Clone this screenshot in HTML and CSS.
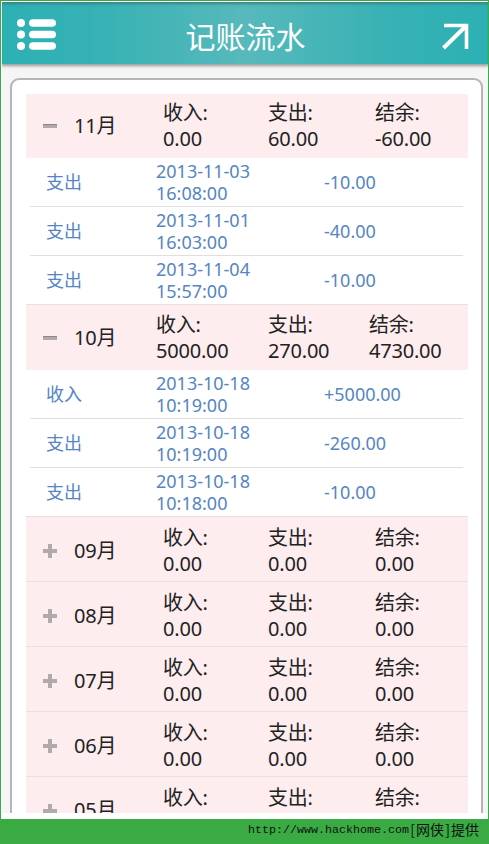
FILE: index.html
```html
<!DOCTYPE html>
<html lang="zh-CN">
<head>
    <meta charset="UTF-8">
    <meta name="viewport" content="width=device-width, initial-scale=1.0">
    <title>记账流水</title>
    <link rel="stylesheet" href="styles.css">
</head>
<body>
    <div class="frame">
        <div class="screen">
            <header class="topbar">
                <svg class="menu-icon" width="40" height="34" viewBox="0 0 40 34" fill="#fff">
                    <circle cx="5" cy="5" r="4"/>
                    <circle cx="5" cy="16.5" r="4"/>
                    <circle cx="5" cy="28" r="4"/>
                    <rect x="13" y="1.2" width="27" height="7.6" rx="3.8"/>
                    <rect x="13" y="12.7" width="27" height="7.6" rx="3.8"/>
                    <rect x="13" y="24.2" width="27" height="7.6" rx="3.8"/>
                </svg>
                <h1>记账流水</h1>
                <svg class="share-icon" width="28" height="28" viewBox="0 0 28 28" fill="none" stroke="#fff">
                    <path d="M2 2.5H24.5V26" stroke-width="3.6"/>
                    <path d="M1.5 25L24 3" stroke-width="4"/>
                </svg>
            </header>

            <main class="panel">
                <section>
                    <div class="month first">
                        <span class="toggle minus"></span>
                        <span class="name">11月</span>
                        <span>收入:<br>0.00</span>
                        <span>支出:<br>60.00</span>
                        <span>结余:<br>-60.00</span>
                    </div>
                    <ul>
                        <li><span>支出</span><span>2013-11-03<br>16:08:00</span><span>-10.00</span></li>
                        <li><span>支出</span><span>2013-11-01<br>16:03:00</span><span>-40.00</span></li>
                        <li><span>支出</span><span>2013-11-04<br>15:57:00</span><span>-10.00</span></li>
                    </ul>
                </section>

                <section>
                    <div class="month wide">
                        <span class="toggle minus"></span>
                        <span class="name">10月</span>
                        <span>收入:<br>5000.00</span>
                        <span>支出:<br>270.00</span>
                        <span>结余:<br>4730.00</span>
                    </div>
                    <ul>
                        <li><span>收入</span><span>2013-10-18<br>10:19:00</span><span>+5000.00</span></li>
                        <li><span>支出</span><span>2013-10-18<br>10:19:00</span><span>-260.00</span></li>
                        <li><span>支出</span><span>2013-10-18<br>10:18:00</span><span>-10.00</span></li>
                    </ul>
                </section>

                <section>
                    <div class="month">
                        <span class="toggle"></span>
                        <span class="name">09月</span>
                        <span>收入:<br>0.00</span>
                        <span>支出:<br>0.00</span>
                        <span>结余:<br>0.00</span>
                    </div>
                    <div class="month">
                        <span class="toggle"></span>
                        <span class="name">08月</span>
                        <span>收入:<br>0.00</span>
                        <span>支出:<br>0.00</span>
                        <span>结余:<br>0.00</span>
                    </div>
                    <div class="month">
                        <span class="toggle"></span>
                        <span class="name">07月</span>
                        <span>收入:<br>0.00</span>
                        <span>支出:<br>0.00</span>
                        <span>结余:<br>0.00</span>
                    </div>
                    <div class="month">
                        <span class="toggle"></span>
                        <span class="name">06月</span>
                        <span>收入:<br>0.00</span>
                        <span>支出:<br>0.00</span>
                        <span>结余:<br>0.00</span>
                    </div>
                    <div class="month">
                        <span class="toggle"></span>
                        <span class="name">05月</span>
                        <span>收入:</span>
                        <span>支出:</span>
                        <span>结余:</span>
                    </div>
                </section>
            </main>
        </div>
    </div>
    <footer><span class="url">http://www.hackhome.com</span><span class="bracket">[</span>网侠<span class="bracket">]</span>提供</footer>
</body>
</html>
```

FILE: styles.css
```css
* {
    box-sizing: border-box;
}
body {
    margin: 0;
    height: 844px;
    padding: 1px 1px 0;
    overflow: hidden;
    background-color: #3aaa43;
    font-family: "Noto Sans", "Noto Sans CJK SC", sans-serif;
}
.frame {
    height: 818px;
    padding: 1px 0 6px 1px;
    background-color: #fff;
}
.screen {
    height: 811px;
    overflow: hidden;
    background-color: #f5f5f5;
}

/* barre du haut */
.topbar {
    display: flex;
    justify-content: space-between;
    align-items: center;
    height: 62px;
    padding: 3px 18px 0 14px;
    background: linear-gradient(to right, #2db1b4 0%, #35b1b4 18%, #57b9bb 50%, #35b1b4 82%, #2db1b4 100%);
    box-shadow: inset 0 3px 3px -1px #3a8488, 0 1px 3px 1px #999;
}
.topbar h1 {
    margin: 0 0 0 -7px;
    padding-top: 4px;
    color: #fff;
    font-size: 30px;
    font-weight: 400;
    line-height: 40px;
}
.share-icon {
    margin-top: 4px;
}

/* liste des mois */
.panel {
    height: 760px;
    margin: 14px 5px 0 8px;
    padding: 14px 13px 0 14px;
    border: 2px solid #b5b5b5;
    border-radius: 9px;
    background-color: #fff;
}
.month {
    display: grid;
    grid-template-columns: 48px 89px 105px 107px 1fr;
    align-items: center;
    height: 65px;
    padding-top: 3px;
    border-top: 1px solid #eadedf;
    background-color: #fdedee;
    color: #222;
    font-size: 20px;
    line-height: 26px;
    letter-spacing: -0.2px;
}
.month.first {
    height: 64px;
    padding-top: 0;
    border-top: none;
}
.month.wide {
    grid-template-columns: 48px 82px 112px 101px 1fr;
    height: 66px;
    padding-top: 1px;
}
/* le dernier mois est coupé par le bas de l'écran */
.month:last-child {
    height: 38px;
    align-items: start;
    padding-top: 8px;
}
.month:last-child .toggle {
    margin-top: 19px;
}
.month:last-child .name {
    margin-top: 12px;
}
.toggle {
    position: relative;
    width: 14px;
    height: 14px;
    margin-left: 17px;
}
.toggle::before,
.toggle::after {
    content: "";
    position: absolute;
    top: 5px;
    left: 0;
    width: 14px;
    height: 4px;
    background-color: #b0aaaa;
}
.toggle::after {
    transform: rotate(90deg);
}
.toggle.minus::before {
    height: 3px;
    border-top: 1px solid #888;
}
.toggle.minus::after {
    display: none;
}
ul {
    list-style-type: none;
    margin: 0 5px 0 4px;
    padding: 0;
}
li {
    display: grid;
    grid-template-columns: 110px 168px 1fr;
    align-items: center;
    height: 49px;
    padding-left: 16px;
    border-bottom: 1px solid #dfdfdf;
    color: #5585c3;
    font-size: 18px;
    line-height: 22px;
}
li:last-child {
    height: 48px;
    border-bottom: none;
}

footer {
    display: flex;
    justify-content: flex-end;
    padding-right: 9px;
    color: #111;
    font-family: "Noto Sans CJK SC", sans-serif;
    font-size: 14px;
    line-height: 21px;
}
.url {
    padding-top: 1px;
    font-family: "Liberation Mono", monospace;
    font-size: 11.67px;
}
.bracket {
    width: 7px;
    text-align: center;
}
```
